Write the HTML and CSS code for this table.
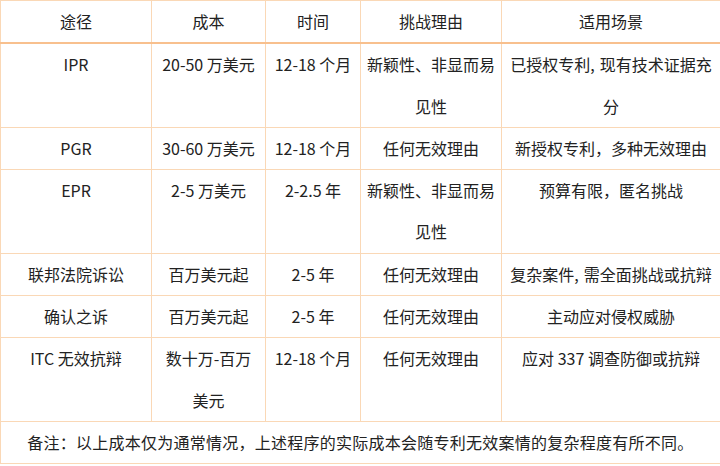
FILE: index.html
```html
<!DOCTYPE html>
<html lang="zh-CN">
<head>
<meta charset="utf-8">
<link rel="stylesheet" href="styles.css">
</head>
<body>
<table class="cost-table">
  <colgroup>
    <col class="c1"><col class="c2"><col class="c3"><col class="c4"><col class="c5">
  </colgroup>
  <thead>
    <tr><th>途径</th><th>成本</th><th>时间</th><th>挑战理由</th><th>适用场景</th></tr>
  </thead>
  <tbody>
    <tr><td>IPR</td><td class="cost">20-50 万美元</td><td>12-18 个月</td><td>新颖性、非显而易见性</td><td>已授权专利<span class="comma">,</span>现有技术证据充分</td></tr>
    <tr><td>PGR</td><td class="cost">30-60 万美元</td><td>12-18 个月</td><td>任何无效理由</td><td>新授权专利，多种无效理由</td></tr>
    <tr><td>EPR</td><td class="cost">2-5 万美元</td><td>2-2.5 年</td><td>新颖性、非显而易见性</td><td>预算有限，匿名挑战</td></tr>
    <tr><td>联邦法院诉讼</td><td class="cost">百万美元起</td><td>2-5 年</td><td>任何无效理由</td><td>复杂案件<span class="comma">,</span>需全面挑战或抗辩</td></tr>
    <tr><td>确认之诉</td><td class="cost">百万美元起</td><td>2-5 年</td><td>任何无效理由</td><td>主动应对侵权威胁</td></tr>
    <tr><td>ITC 无效抗辩</td><td class="cost">数十万-百万美元</td><td>12-18 个月</td><td>任何无效理由</td><td>应对 337 调查防御或抗辩</td></tr>
    <tr><td class="note" colspan="5">备注：以上成本仅为通常情况，上述程序的实际成本会随专利无效案情的复杂程度有所不同。</td></tr>
  </tbody>
</table>
</body>
</html>
```

FILE: styles.css
```css
html, body {
  margin: 0;
  padding: 0;
  background: #ffffff;
}
.cost-table {
  border-collapse: collapse;
  table-layout: fixed;
  width: 720px;
  font-family: "Noto Sans CJK SC", "Noto Sans", sans-serif;
  font-size: 16px;
  color: #222222;
}
.c1 { width: 151px; }
.c2 { width: 114px; }
.c3 { width: 95px; }
.c4 { width: 141px; }
.c5 { width: 219px; }
.cost-table th,
.cost-table td {
  border: 1px solid #fad8b6;
  padding: 0 5px;
  line-height: 41.3px;
  text-align: center;
  vertical-align: top;
  font-weight: normal;
}
.cost-table thead th {
  border-bottom: 2px solid #f8c08e;
}
.cost-table td.cost {
  padding: 0 9px;
}
.comma {
  margin-right: 5px;
}
.cost-table td.note {
  text-align: center;
  letter-spacing: 0.25px;
}
```
